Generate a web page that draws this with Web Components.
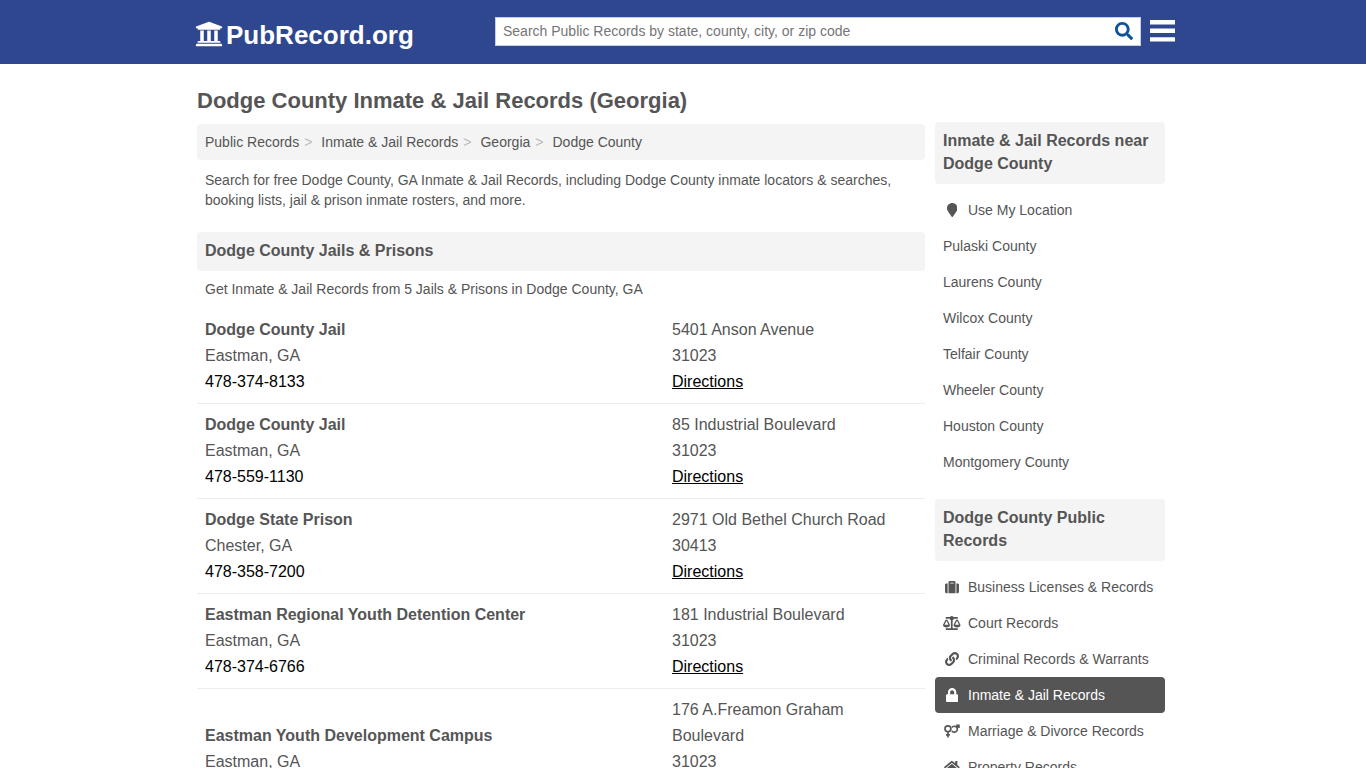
<!DOCTYPE html>
<html lang="en">
<head>
<meta charset="utf-8">
<meta name="viewport" content="width=device-width, initial-scale=1">
<title>Dodge County Inmate &amp; Jail Records (Georgia)</title>
<style>
  html { scrollbar-width: none; }
  body { margin: 0; background: #fff; color: #555; font: 14px/20px "Liberation Sans", Arial, sans-serif; }
</style>
</head>
<body>
<pr-page>
  <pr-header slot="header"></pr-header>
  <pr-main slot="main">
    <h1 slot="title">Dodge County Inmate &amp; Jail Records (Georgia)</h1>
    <pr-crumbs slot="crumbs">
      <a href="#records">Public Records</a>
      <a href="#inmate">Inmate &amp; Jail Records</a>
      <a href="#georgia">Georgia</a>
      <a href="#dodge">Dodge County</a>
    </pr-crumbs>
    <p slot="intro">Search for free Dodge County, GA Inmate &amp; Jail Records, including Dodge County inmate locators &amp; searches, booking lists, jail &amp; prison inmate rosters, and more.</p>
    <pr-heading>Dodge County Jails &amp; Prisons</pr-heading>
    <p slot="summary">Get Inmate &amp; Jail Records from 5 Jails &amp; Prisons in Dodge County, GA</p>
    <pr-facility slot="list" name="Dodge County Jail" city="Eastman, GA" phone="478-374-8133" street="5401 Anson Avenue" zip="31023"></pr-facility>
    <pr-facility slot="list" name="Dodge County Jail" city="Eastman, GA" phone="478-559-1130" street="85 Industrial Boulevard" zip="31023"></pr-facility>
    <pr-facility slot="list" name="Dodge State Prison" city="Chester, GA" phone="478-358-7200" street="2971 Old Bethel Church Road" zip="30413"></pr-facility>
    <pr-facility slot="list" name="Eastman Regional Youth Detention Center" city="Eastman, GA" phone="478-374-6766" street="181 Industrial Boulevard" zip="31023"></pr-facility>
    <pr-facility slot="list" name="Eastman Youth Development Campus" city="Eastman, GA" street="176 A.Freamon Graham Boulevard" zip="31023"></pr-facility>
  </pr-main>
  <pr-side slot="side">
    <pr-heading slot="heading">Inmate &amp; Jail Records near Dodge County</pr-heading>
    <pr-link icon="marker">Use My Location</pr-link>
    <pr-link>Pulaski County</pr-link>
    <pr-link>Laurens County</pr-link>
    <pr-link>Wilcox County</pr-link>
    <pr-link>Telfair County</pr-link>
    <pr-link>Wheeler County</pr-link>
    <pr-link>Houston County</pr-link>
    <pr-link>Montgomery County</pr-link>
  </pr-side>
  <pr-side slot="side">
    <pr-heading slot="heading">Dodge County Public Records</pr-heading>
    <pr-link icon="suitcase">Business Licenses &amp; Records</pr-link>
    <pr-link icon="scale">Court Records</pr-link>
    <pr-link icon="link">Criminal Records &amp; Warrants</pr-link>
    <pr-link icon="lock" active>Inmate &amp; Jail Records</pr-link>
    <pr-link icon="couple">Marriage &amp; Divorce Records</pr-link>
    <pr-link icon="home">Property Records</pr-link>
  </pr-side>
</pr-page>
<script>
const ICONS = {
  bank: ['0 0 512 512', '<path d="M496 128v16a8 8 0 0 1-8 8h-24v12c0 6.627-5.373 12-12 12H60c-6.627 0-12-5.373-12-12v-12H24a8 8 0 0 1-8-8v-16a8 8 0 0 1 4.941-7.392l232-88a7.996 7.996 0 0 1 6.118 0l232 88A8 8 0 0 1 496 128zm-24 304H40c-13.255 0-24 10.745-24 24v16a8 8 0 0 0 8 8h464a8 8 0 0 0 8-8v-16c0-13.255-10.745-24-24-24zM96 192v192H60c-6.627 0-12 5.373-12 12v20h416v-20c0-6.627-5.373-12-12-12h-36V192h-64v192h-64V192h-64v192h-64V192H96z"/>'],
  search: ['0 0 512 512', '<path d="M505 442.7L405.3 343c-4.5-4.5-10.6-7-17-7H372c27.6-35.3 44-79.7 44-128C416 93.1 322.9 0 208 0S0 93.1 0 208s93.1 208 208 208c48.3 0 92.7-16.4 128-44v16.3c0 6.4 2.5 12.5 7 17l99.7 99.7c9.4 9.4 24.6 9.4 33.9 0l28.3-28.3c9.4-9.4 9.4-24.6.1-34zM208 336c-70.7 0-128-57.2-128-128 0-70.7 57.2-128 128-128 70.7 0 128 57.2 128 128 0 70.7-57.2 128-128 128z"/>'],
  menu: ['0 0 25 22', '<path d="M0 0h25v4.400H0zM0 8.600h25v4.400H0zM0 17.200h25v4.400H0z"/>'],
  marker: ['0 0 384 512', '<path d="M172.268 501.67C26.97 291.031 0 269.413 0 192 0 85.961 85.961 0 192 0s192 85.961 192 192c0 77.413-26.97 99.031-172.268 309.67-9.535 13.774-29.93 13.773-39.464 0z"/>'],
  suitcase: ['0 0 512 512', '<path d="M128 480h256V80c0-26.5-21.5-48-48-48H176c-26.5 0-48 21.5-48 48v400zm64-384h128v32H192V96zm320 80v256c0 26.5-21.5 48-48 48h-48V128h48c26.5 0 48 21.5 48 48zM96 480H48c-26.500 0-48-21.500-48-48V176c0-26.500 21.500-48 48-48h48v352z"/>'],
  scale: ['0 0 640 512', '<path d="M256 336h-.02c0-16.18 1.34-8.73-85.05-181.51-17.65-35.29-68.19-35.36-85.87 0C-2.06 328.75.02 320.33.02 336H0c0 44.18 57.31 80 128 80s128-35.82 128-80zM128 176l72 144H56l72-144zm511.98 160c0-16.18 1.34-8.73-85.05-181.51-17.65-35.29-68.19-35.36-85.87 0-87.12 174.26-85.04 165.84-85.04 181.51H384c0 44.18 57.31 80 128 80s128-35.82 128-80h-.02zM440 320l72-144 72 144H440zm88 128H352V153.25c23.51-10.29 41.16-31.48 46.39-57.25H528c8.84 0 16-7.16 16-16V48c0-8.84-7.16-16-16-16H383.64C369.04 12.68 346.09 0 320 0s-49.04 12.68-63.64 32H112c-8.84 0-16 7.16-16 16v32c0 8.84 7.16 16 16 16h129.61c5.23 25.76 22.87 46.96 46.39 57.25V448H112c-8.84 0-16 7.16-16 16v32c0 8.84 7.16 16 16 16h416c8.84 0 16-7.16 16-16v-32c0-8.84-7.16-16-16-16z"/>'],
  link: ['0 0 512 512', '<path d="M326.612 185.391c59.747 59.809 58.927 155.698.36 214.59-.11.12-.24.25-.36.37l-67.2 67.2c-59.27 59.27-155.699 59.262-214.96 0-59.27-59.26-59.27-155.7 0-214.96l37.106-37.106c9.84-9.84 26.786-3.3 27.294 10.606.648 17.722 3.826 35.527 9.69 52.721 1.986 5.822.567 12.262-3.783 16.612l-13.087 13.087c-28.026 28.026-28.905 73.66-1.155 101.96 28.024 28.579 74.086 28.749 102.325.51l67.2-67.19c28.191-28.191 28.073-73.757 0-101.83-3.701-3.694-7.429-6.564-10.341-8.569a16.037 16.037 0 0 1-6.947-12.606c-.396-10.567 3.348-21.456 11.698-29.806l21.054-21.055c5.521-5.521 14.182-6.199 20.584-1.731a152.482 152.482 0 0 1 20.522 17.197zM467.547 44.449c-59.261-59.262-155.69-59.27-214.96 0l-67.2 67.2c-.12.12-.25.25-.36.37-58.566 58.892-59.387 154.781.36 214.59a152.454 152.454 0 0 0 20.521 17.196c6.402 4.468 15.064 3.789 20.584-1.731l21.054-21.055c8.35-8.35 12.094-19.239 11.698-29.806a16.037 16.037 0 0 0-6.947-12.606c-2.912-2.005-6.64-4.875-10.341-8.569-28.073-28.073-28.191-73.639 0-101.83l67.2-67.19c28.239-28.239 74.3-28.069 102.325.51 27.75 28.3 26.872 73.934-1.155 101.96l-13.087 13.087c-4.35 4.35-5.769 10.79-3.783 16.612 5.864 17.194 9.042 34.999 9.69 52.721.509 13.906 17.454 20.446 27.294 10.606l37.106-37.106c59.271-59.259 59.271-155.699.001-214.959z"/>'],
  lock: ['0 0 448 512', '<path d="M400 224h-24v-72C376 68.200 307.800 0 224 0S72 68.200 72 152v72H48c-26.500 0-48 21.500-48 48v192c0 26.500 21.500 48 48 48h352c26.500 0 48-21.500 48-48V272c0-26.500-21.500-48-48-48zm-104 0H152v-72c0-39.700 32.300-72 72-72s72 32.300 72 72v72z"/>'],
  couple: ['0 0 576 512', '<g fill="none" stroke="currentColor" stroke-width="60"><circle cx="144" cy="176" r="108"/><path d="M144 288v208M72 400h144M292 130a108 108 0 1 1-2 120M464 126l76-76M444 46h102v98"/></g>'],
  home: ['0 0 576 512', '<path d="M280.37 148.26L96 300.11V464a16 16 0 0 0 16 16l112.06-.29a16 16 0 0 0 15.92-16V368a16 16 0 0 1 16-16h64a16 16 0 0 1 16 16v95.64a16 16 0 0 0 16 16.05L464 480a16 16 0 0 0 16-16V300L295.67 148.26a12.19 12.19 0 0 0-15.3 0zM571.6 251.47L488 182.56V44.05a12 12 0 0 0-12-12h-56a12 12 0 0 0-12 12v72.61L318.47 43a48 48 0 0 0-61 0L4.34 251.47a12 12 0 0 0-1.6 16.9l25.5 31A12 12 0 0 0 45.15 301l235.22-193.74a12.19 12.19 0 0 1 15.3 0L530.9 301a12 12 0 0 0 16.9-1.6l25.5-31a12 12 0 0 0-1.700-16.930z"/>']
};
const icon = n => `<svg class="icon" viewBox="${ICONS[n][0]}" fill="currentColor" aria-hidden="true">${ICONS[n][1]}</svg>`;

function define(name, render) {
  customElements.define(name, class extends HTMLElement {
    constructor() {
      super();
      this.attachShadow({ mode: 'open' });
    }
    connectedCallback() {
      this.shadowRoot.innerHTML = render(this);
    }
  });
}

define('pr-page', () => `
<style>
  :host { display: block; }
  .cols { display: flex; gap: 10px; align-items: flex-start; max-width: 968px; margin: 0 auto; padding: 0 10px 0 6px; }
  main { flex: 1; min-width: 0; }
  aside { flex: 0 0 230px; padding-top: 58px; display: grid; gap: 19px; }
</style>
<slot name="header"></slot>
<div class="cols"><main><slot name="main"></slot></main><aside><slot name="side"></slot></aside></div>`);

define('pr-header', () => `
<style>
  :host { display: block; background: #2f478f; }
  .bar { display: flex; align-items: center; box-sizing: border-box; max-width: 984px; height: 64px; margin: 0 auto; padding: 0 0 2px 4px; }
  .logo { display: flex; align-items: center; gap: 3px; padding-top: 8px; color: #fff; font-size: 26px; line-height: 30px; font-weight: bold; text-decoration: none; }
  .logo .icon { width: 28px; height: 28px; margin-bottom: 2px; }
  form { display: flex; flex: 0 1 646px; box-sizing: border-box; height: 29px; margin: 0 9px 0 auto; background: #fff; border: 1px solid #c4d0ea; }
  input { flex: 1; min-width: 0; border: 0; padding: 0 7px; background: none; font: inherit; color: #555; outline: 0; }
  input::placeholder { color: #757575; opacity: 1; }
  button { display: grid; place-items: center; border: 0; padding: 0; background: none; cursor: pointer; }
  form button { width: 33px; color: #0f529c; }
  form .icon { width: 18px; height: 18px; }
  .menu { color: #fff; }
  .menu .icon { width: 25px; height: 22px; }
</style>
<header class="bar">
  <a class="logo" href="#home">${icon('bank')}<span>PubRecord.org</span></a>
  <form role="search">
    <input type="text" aria-label="Search Public Records" placeholder="Search Public Records by state, county, city, or zip code">
    <button type="button" aria-label="Search">${icon('search')}</button>
  </form>
  <button class="menu" type="button" aria-label="Menu">${icon('menu')}</button>
</header>`);

define('pr-main', () => `
<style>
  :host { display: block; padding-top: 23px; }
  ::slotted(h1) { margin: 0 0 9px; font-size: 22px; line-height: 28px; }
  ::slotted(p) { margin: 0; padding: 10px 8px 8px; }
  ::slotted(p[slot="summary"]) { padding: 8px 8px 10px; }
  .intro { display: block; margin-bottom: 14px; }
</style>
<slot name="title"></slot>
<slot name="crumbs"></slot>
<div class="intro"><slot name="intro"></slot></div>
<slot></slot>
<slot name="summary"></slot>
<slot name="list"></slot>`);

define('pr-crumbs', () => `
<style>
  :host { display: flex; padding: 8px; background: #f4f4f4; border-radius: 4px; }
  ::slotted(a) { color: #555; text-decoration: none; }
  nav { display: flex; gap: 5px; white-space: pre; }
  i { font-style: normal; color: #bbb; padding-right: 4px; }
</style>
<nav aria-label="Breadcrumb"></nav><slot></slot>`);

/* Each breadcrumb link gets its own named slot so that separators can sit between them. */
for (const el of document.querySelectorAll('pr-crumbs')) {
  const nav = el.shadowRoot.querySelector('nav');
  const links = [...el.children];
  el.shadowRoot.querySelector('slot').remove();
  nav.innerHTML = links.map((a, i) => {
    a.slot = 'c' + i;
    return `<slot name="c${i}"></slot>` + (i < links.length - 1 ? '<i>&gt;</i>' : '');
  }).join('');
}

define('pr-heading', () => `
<style>
  :host { display: block; background: #f4f4f4; border-radius: 4px; }
  h2 { margin: 0; padding: 7px 8px 9px; font-size: 16px; line-height: 23px; }
</style>
<h2><slot></slot></h2>`);

define('pr-facility', el => {
  const v = n => el.getAttribute(n);
  return `
<style>
  :host { display: grid; grid-template-columns: minmax(0, 1fr) 261px; align-items: end; font-size: 16px; line-height: 26px; border-bottom: 1px solid #ececec; }
  div { padding: 8px; display: grid; justify-items: start; }
  a { color: #000; }
  .tel { text-decoration: none; }
</style>
<div><strong>${v('name')}</strong><span>${v('city')}</span>${v('phone') ? `<a class="tel" href="tel:${v('phone')}">${v('phone')}</a>` : '<span>&nbsp;</span>'}</div>
<div><span>${v('street')}</span><span>${v('zip')}</span><a href="#directions">Directions</a></div>`;
});

define('pr-side', () => `
<style>
  :host { display: block; }
  nav { padding-top: 8px; }
</style>
<slot name="heading"></slot>
<nav><slot></slot></nav>`);

define('pr-link', el => `
<style>
  :host { display: block; }
  a { display: flex; align-items: center; gap: 7px; padding: 8px; color: #555; text-decoration: none; border-radius: 4px; }
  :host([active]) a { background: #555; color: #fff; }
  .box { display: grid; place-items: center; width: 18px; height: 14px; }
  .icon { height: 14px; }
</style>
<a href="#${el.getAttribute('icon') || 'county'}">${el.hasAttribute('icon') ? `<span class="box">${icon(el.getAttribute('icon'))}</span>` : ''}<span><slot></slot></span></a>`);
</script>
</body>
</html>
